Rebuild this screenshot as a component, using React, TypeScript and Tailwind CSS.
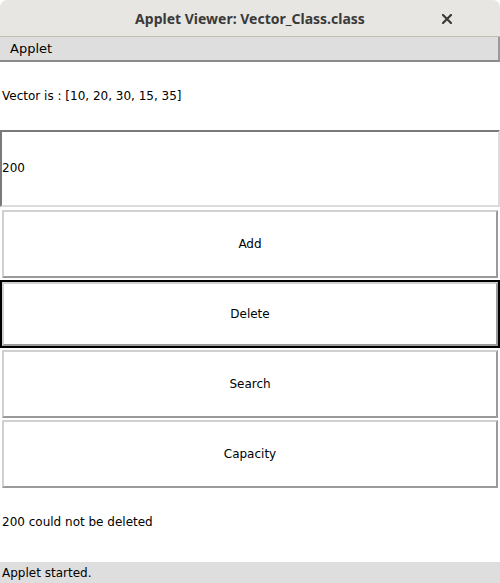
const buttons = ["Add", "Delete", "Search", "Capacity"];

const App = () => {
  return (
    <div className="w-[500px] h-[583px] flex flex-col bg-white overflow-hidden" style={{ fontFamily: '"DejaVu Sans", sans-serif' }}>
      <div className="h-[37px] shrink-0 flex items-center justify-center relative rounded-t-[7px] bg-[#e8e6e3] border-b border-[#c3bcb4]">
        <span className="text-[14px] font-bold text-[#3a3a3a]" style={{ fontFamily: '"Noto Sans", sans-serif' }}>
          Applet Viewer: Vector_Class.class
        </span>
        <svg className="absolute right-[48px] top-[14px]" width="10" height="10" viewBox="0 0 10 10">
          <path d="M1 1 L9 9 M9 1 L1 9" stroke="#3a3a3a" strokeWidth="2.2" strokeLinecap="square" />
        </svg>
      </div>
      <div className="h-[25px] shrink-0 flex items-center px-[10px] bg-[#dedede] border-b-2 border-[#8a8a8a] border-r-2 border-r-[#9a9a9a] text-[13px] text-black">
        Applet
      </div>
      <div className="flex-1 flex flex-col text-[12px] text-black">
        <div className="h-[68px] flex items-center px-[2px]">Vector is : [10, 20, 30, 15, 35]</div>
        <div className="h-[77px] flex items-center pb-[1px] border-t-2 border-l-2 border-t-[#7a7a7a] border-l-[#7a7a7a] border-r-2 border-b-2 border-r-[#dcdcdc] border-b-[#dcdcdc]">
          200
        </div>
        <div className="h-[2px]" />
        {buttons.map((b) =>
          b === "Delete" ? (
            <div key={b} className="h-[70px] py-[1px]">
              <div className="h-full border-2 border-black">
                <div className="w-full h-full flex items-center justify-center border-2 border-t-[#d0d0d0] border-l-[#d0d0d0] border-r-[#9a9a9a] border-b-[#9a9a9a]">
                  {b}
                </div>
              </div>
            </div>
          ) : (
            <div key={b} className="h-[70px] p-[2px] py-[1px]">
              <div className="h-full flex items-center justify-center border-2 border-t-[#d0d0d0] border-l-[#d0d0d0] border-r-[#9a9a9a] border-b-[#9a9a9a]">
                {b}
              </div>
            </div>
          )
        )}
        <div className="flex-1 flex items-center px-[2px] pb-[8px]">200 could not be deleted</div>
      </div>
      <div className="h-[21px] shrink-0 flex items-center px-[2px] bg-[#dedede] text-[12px] text-black">Applet started.</div>
    </div>
  );
};

export default App;
